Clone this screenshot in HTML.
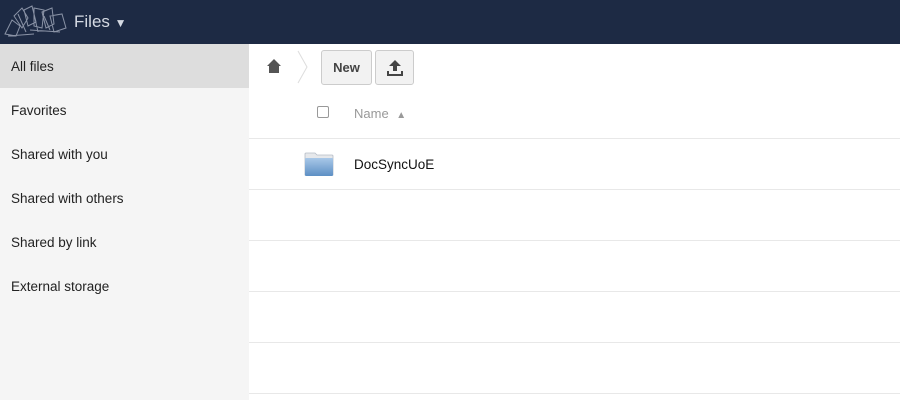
<!DOCTYPE html>
<html><head><style>
*{margin:0;padding:0;box-sizing:border-box}
body{width:900px;height:400px;overflow:hidden;font-family:"Liberation Sans",sans-serif;background:#fff;position:relative}
#hd{position:absolute;top:0;left:0;width:900px;height:44px;background:#1d2a44}
#hd .t{position:absolute;left:74px;top:12px;color:#d5dae3;font-size:17px}
#sb{position:absolute;top:44px;left:0;width:249px;height:356px;background:#f5f5f5}
#sb div{height:44px;line-height:45px;padding-left:11px;font-size:13.5px;color:#222}
#sb .a{background:#ddd}
.btn{position:absolute;top:50px;height:35px;border:1px solid #ccc;border-radius:3px;background:#f2f2f2}
.line{position:absolute;left:249px;width:651px;height:1px;background:#e8e8e8}
</style></head><body>
<div id="hd">
<svg width="68" height="36" style="position:absolute;left:4px;top:4px" fill="none" stroke="#8a93a6" stroke-width="1">
<path d="M1 30 L8 16 L16 22 L12 32 Z M10 12 L18 4 L24 14 L18 24 Z M20 6 L28 2 L32 18 L24 22 Z M30 4 L40 6 L38 24 L30 22 Z M38 8 L48 4 L50 20 L42 24 Z M46 12 L58 10 L62 24 L50 28 Z M4 32 L30 30 M26 26 L56 28 M14 10 L22 28 M30 10 L34 28 M40 12 L46 26"/></svg>
<div class="t">Files <span style="font-size:12px">▼</span></div>
</div>
<div id="sb">
<div class="a">All files</div><div>Favorites</div><div>Shared with you</div><div>Shared with others</div><div>Shared by link</div><div>External storage</div>
</div>
<svg width="16" height="16" style="position:absolute;left:266px;top:58px"><path d="M8 1 L15 8 L13 8 L13 15 L3 15 L3 8 L1 8 Z" fill="#555"/></svg>
<svg width="12" height="34" style="position:absolute;left:297px;top:50px"><path d="M1 1 L10 17 L1 33" fill="none" stroke="#ddd"/></svg>
<div class="btn" style="left:321px;width:51px;text-align:center;line-height:33px;font-size:13px;font-weight:bold;color:#444">New</div>
<div class="btn" style="left:375px;width:39px"><svg width="18" height="18" style="position:absolute;left:10px;top:8px"><path d="M9 1 L15 7 L11 7 L11 12 L7 12 L7 7 L3 7 Z M1 12 L3 12 L3 15 L15 15 L15 12 L17 12 L17 17 L1 17 Z" fill="#444"/></svg></div>
<div style="position:absolute;left:317px;top:106px;width:12px;height:12px;border:1px solid #999;border-radius:2px"></div>
<div style="position:absolute;left:354px;top:106px;font-size:13px;color:#999">Name <span style="font-size:10px;margin-left:4px">▲</span></div>
<div class="line" style="top:138px"></div>
<svg width="30" height="26" style="position:absolute;left:304px;top:151px"><defs><linearGradient id="g" x1="0" y1="0" x2="0" y2="1"><stop offset="0" stop-color="#a9c8e8"/><stop offset="1" stop-color="#5d8fc4"/></linearGradient></defs><path d="M1 3 Q1 2 2 2 L11 2 L13 4 L28 4 Q29 4 29 5 L29 24 L1 24 Z" fill="#e6e8eb" stroke="#b5bcc6" stroke-width="0.8"/><rect x="1" y="7" width="28" height="18" rx="1" fill="url(#g)"/></svg>
<div style="position:absolute;left:354px;top:157px;font-size:13.5px;color:#111">DocSyncUoE</div>
<div class="line" style="top:189px"></div>
<div class="line" style="top:240px"></div>
<div class="line" style="top:291px"></div>
<div class="line" style="top:342px"></div>
<div class="line" style="top:393px"></div>
</body></html>
